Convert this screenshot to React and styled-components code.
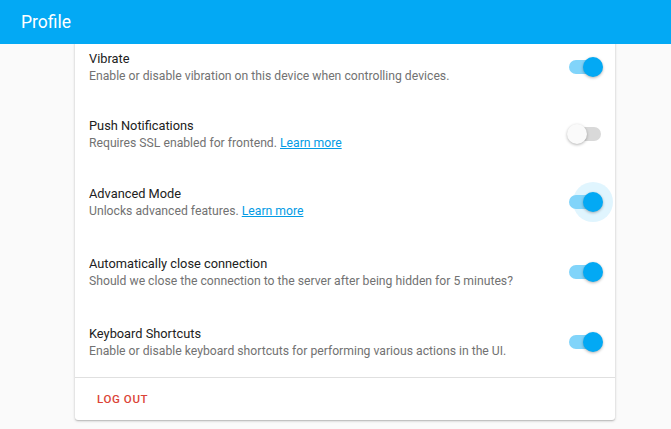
import React from "react";
import styled, { createGlobalStyle } from "styled-components";

const GlobalStyle = createGlobalStyle`
  html, body {
    margin: 0;
    padding: 0;
    background: #fafafa;
    font-family: Roboto, "Noto Sans", sans-serif;
    -webkit-font-smoothing: antialiased;
  }
`;

const settings = [
  {
    title: "Vibrate",
    text: "Enable or disable vibration on this device when controlling devices.",
    on: true,
    height: 68,
  },
  {
    title: "Push Notifications",
    text: "Requires SSL enabled for frontend.",
    link: true,
    on: false,
    height: 66,
  },
  {
    title: "Advanced Mode",
    text: "Unlocks advanced features.",
    link: true,
    on: true,
    focused: true,
    height: 70,
  },
  {
    title: "Automatically close connection",
    text: "Should we close the connection to the server after being hidden for 5 minutes?",
    on: true,
    height: 70,
  },
  {
    title: "Keyboard Shortcuts",
    text: "Enable or disable keyboard shortcuts for performing various actions in the UI.",
    on: true,
    height: 70,
  },
];

const App = () => {
  return (
    <Page>
      <GlobalStyle />
      <Toolbar>
        <Title>Profile</Title>
      </Toolbar>
      <Content>
        <Card>
          {settings.map((s) => (
            <Row key={s.title} $height={s.height}>
              <Info>
                <Heading>{s.title}</Heading>
                <Description>
                  {s.text}
                  {s.link && (
                    <>
                      {" "}
                      <a href="#">Learn more</a>
                    </>
                  )}
                </Description>
              </Info>
              <Switch $focused={s.focused}>
                <Track $on={s.on} />
                <Thumb $on={s.on} />
              </Switch>
            </Row>
          ))}
          <Actions>
            <LogOut>Log out</LogOut>
          </Actions>
        </Card>
      </Content>
    </Page>
  );
};

const Page = styled.div`
  width: 671px;
  height: 429px;
  display: flex;
  flex-direction: column;
  overflow: hidden;
  background: #fafafa;
`;
const Toolbar = styled.header`
  height: 44px;
  flex: none;
  display: flex;
  align-items: center;
  padding: 0 21px;
  background: #03a9f4;
  box-sizing: border-box;
`;
const Title = styled.div`
  color: #fff;
  font-size: 17.5px;
  font-weight: 400;
`;
const Content = styled.main`
  flex: 1;
  overflow: hidden;
  display: flex;
  padding-left: 75px;
`;
const Card = styled.section`
  width: 540px;
  margin-top: -11px;
  align-self: flex-start;
  background: #fff;
  border-radius: 3px;
  box-shadow: 0 1px 3px rgba(0, 0, 0, 0.2), 0 1px 1px rgba(0, 0, 0, 0.12);
`;
const Row = styled.div`
  height: ${(p) => p.$height}px;
  display: flex;
  align-items: center;
  justify-content: space-between;
  padding: 0 14px;
`;
const Info = styled.div`
  display: flex;
  flex-direction: column;
  gap: 3px;
`;
const Heading = styled.div`
  font-size: 12.8px;
  color: #212121;
  line-height: 15px;
`;
const Description = styled.div`
  font-size: 12.2px;
  color: #727272;
  line-height: 15px;
  a {
    color: #039be5;
    text-decoration: underline;
  }
`;
const Switch = styled.div`
  position: relative;
  width: 32px;
  height: 20px;
  flex: none;
  &::before {
    content: "";
    display: ${(p) => (p.$focused ? "block" : "none")};
    position: absolute;
    width: 40px;
    height: 40px;
    border-radius: 50%;
    left: 4px;
    top: -10px;
    background: rgba(3, 169, 244, 0.12);
  }
`;
const Track = styled.div`
  position: absolute;
  left: 0;
  top: 3px;
  width: 32px;
  height: 14px;
  border-radius: 7px;
  background: ${(p) => (p.$on ? "#81d4fa" : "#d9d9d9")};
`;
const Thumb = styled.div`
  position: absolute;
  top: 0;
  left: ${(p) => (p.$on ? "14px" : "-2px")};
  width: 20px;
  height: 20px;
  border-radius: 50%;
  background: ${(p) => (p.$on ? "#03a9f4" : "#fafafa")};
  box-shadow: 0 1px 3px rgba(0, 0, 0, 0.3);
`;
const Actions = styled.div`
  height: 42px;
  border-top: 1px solid #e0e0e0;
  display: flex;
  align-items: center;
  padding: 0 14px;
`;
const LogOut = styled.button`
  border: 0;
  background: none;
  padding: 6px 8px;
  font-family: Roboto, sans-serif;
  font-size: 11.5px;
  font-weight: 500;
  letter-spacing: 0.6px;
  text-transform: uppercase;
  color: #db4437;
  cursor: pointer;
`;

export default App;
